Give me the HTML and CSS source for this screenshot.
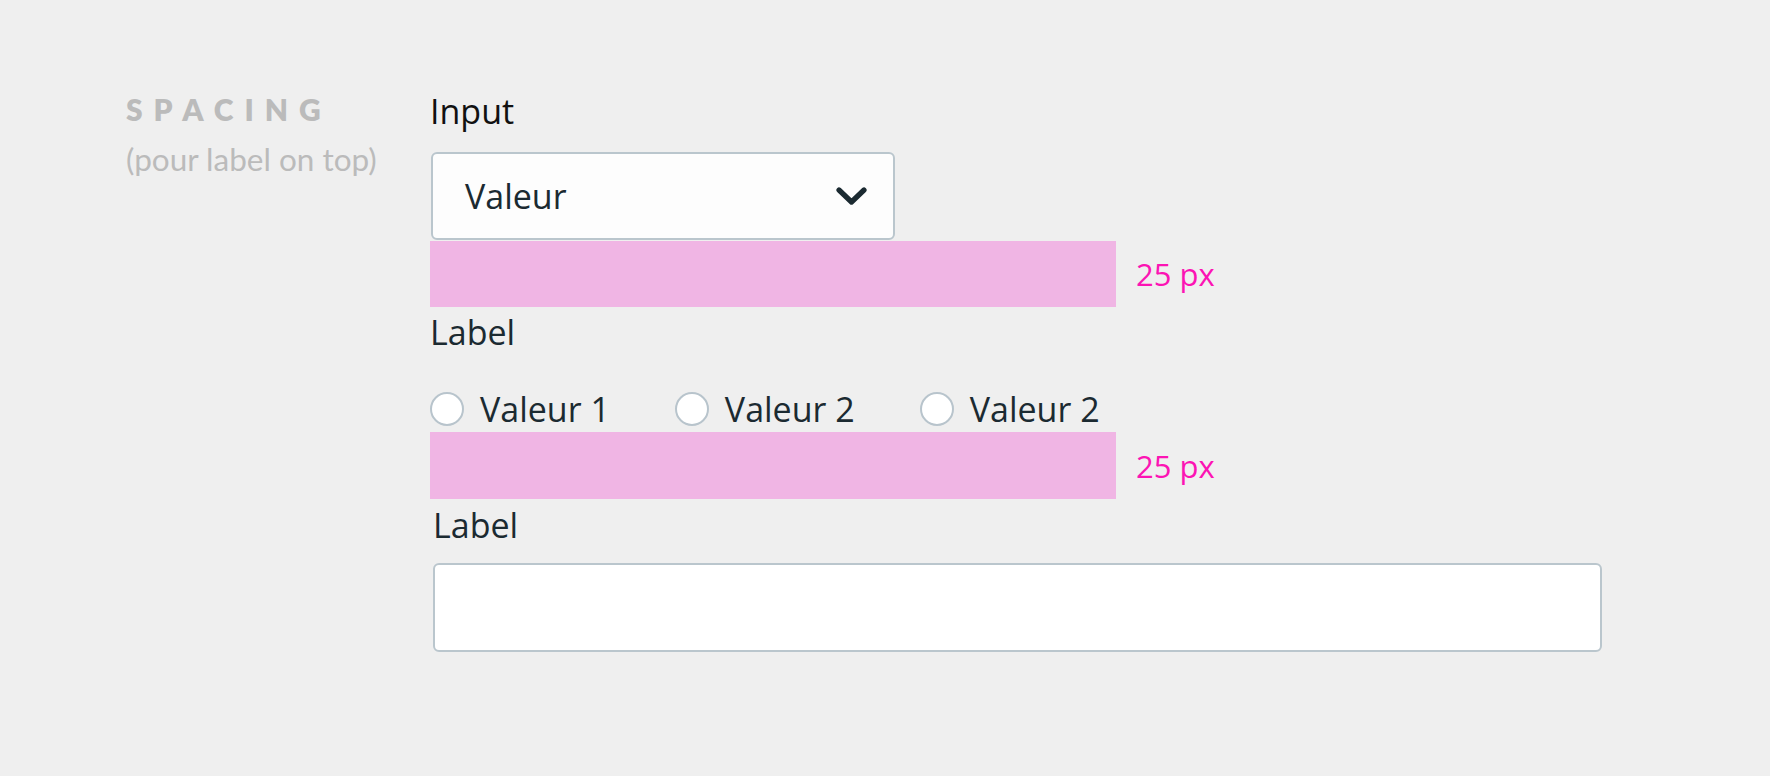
FILE: index.html
```html
<!DOCTYPE html>
<html lang="fr">
<head>
<meta charset="utf-8">
<title>Spacing</title>
<link rel="stylesheet" href="styles.css">
</head>
<body>
<div class="page">
  <aside class="side">
    <div class="side-title">SPACING</div>
    <div class="side-sub">(pour label on top)</div>
  </aside>
  <main class="form">
    <div class="label label-input">Input</div>
    <div class="select">
      <span class="select-value">Valeur</span>
      <svg class="chevron" width="31" height="18" viewBox="0 0 31 18" aria-hidden="true">
        <polyline points="3,3 15.5,15 28,3" fill="none" stroke="#1b2a31" stroke-width="5.2" stroke-linecap="round" stroke-linejoin="round"/>
      </svg>
    </div>
    <div class="spacer-row">
      <div class="spacer"></div>
      <span class="spacer-note">25 px</span>
    </div>
    <div class="label label-radio">Label</div>
    <div class="radios">
      <label class="radio"><span class="radio-dot"></span><span class="radio-text">Valeur 1</span></label>
      <label class="radio"><span class="radio-dot"></span><span class="radio-text">Valeur 2</span></label>
      <label class="radio"><span class="radio-dot"></span><span class="radio-text">Valeur 2</span></label>
    </div>
    <div class="spacer-row spacer-row-2">
      <div class="spacer spacer-2"></div>
      <span class="spacer-note">25 px</span>
    </div>
    <div class="label label-text">Label</div>
    <div class="textbox"></div>
  </main>
</div>
</body>
</html>
```
FILE: styles.css
```css
html, body {
  margin: 0;
  padding: 0;
}
body {
  background: #efefef;
  width: 1770px;
  height: 776px;
  overflow: hidden;
}
.page {
  display: flex;
  padding: 91px 0 0 126px;
}
.side {
  width: 304px;
  flex: none;
  font-family: "Lato", "Inter", sans-serif;
  color: #bbbbbb;
}
.side-title {
  font-size: 30px;
  font-weight: 800;
  letter-spacing: 11px;
  line-height: 36px;
  margin-top: 0;
}
.side-sub {
  font-size: 31.5px;
  font-weight: 400;
  line-height: 40px;
  margin-top: 12px;
}
.form {
  display: flex;
  flex-direction: column;
  align-items: flex-start;
  font-family: "Open Sans", "Noto Sans", sans-serif;
  font-size: 34px;
  line-height: 40px;
  color: #1b2a31;
}
.label {
  height: 40px;
}
.label-input {
  color: #111111;
}
.select {
  box-sizing: border-box;
  margin-top: 21px;
  margin-left: 1px;
  width: 464px;
  height: 88px;
  border: 2px solid #bac6cd;
  border-radius: 6px;
  background: #fdfdfd;
  display: flex;
  align-items: center;
  justify-content: space-between;
  padding: 0 26px 0 32px;
}
.chevron {
  display: block;
}
.spacer-row {
  display: flex;
  align-items: center;
  gap: 20px;
  margin-top: 1px;
}
.spacer {
  width: 686px;
  height: 66px;
  background: #f0b5e4;
}
.spacer-note {
  font-size: 31px;
  line-height: 36px;
  color: #fc14b4;
}
.label-radio {
  margin-top: 5px;
}
.radios {
  margin-top: 37px;
  display: flex;
  gap: 65px;
  height: 40px;
  align-items: center;
}
.radio {
  display: flex;
  align-items: center;
  gap: 16px;
}
.radio-dot {
  box-sizing: border-box;
  width: 34px;
  height: 34px;
  border: 2.5px solid #b8c4cc;
  border-radius: 50%;
  background: #ffffff;
  flex: none;
}
.spacer-row-2 {
  margin-top: 3px;
}
.spacer-2 {
  height: 67px;
}
.label-text {
  margin-top: 6px;
  margin-left: 3px;
}
.textbox {
  box-sizing: border-box;
  margin-top: 18px;
  margin-left: 3px;
  width: 1169px;
  height: 89px;
  border: 2px solid #bac6cd;
  border-radius: 6px;
  background: #ffffff;
}
```
